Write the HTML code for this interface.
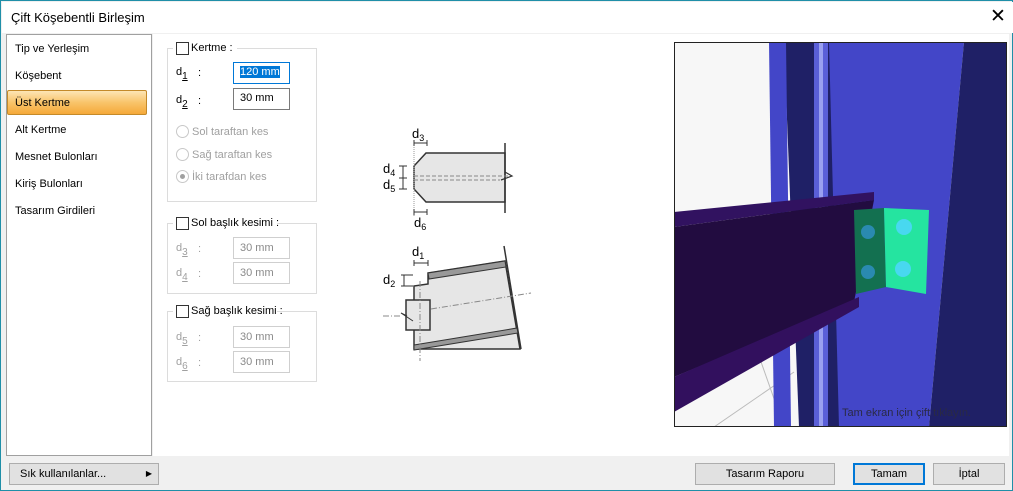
<!DOCTYPE html>
<html><head><meta charset="utf-8"><style>
*{box-sizing:border-box;margin:0;padding:0}
body{width:1013px;height:491px;overflow:hidden;font-family:"Liberation Sans",sans-serif;font-size:12px;color:#000;background:#f0f0f0;position:relative}
.win{position:absolute;left:0;top:0;width:1013px;height:491px;border:1px solid #1f8fa8;background:#f0f0f0}
.abs{position:absolute}
.title{left:1px;top:1px;width:1011px;height:31px;background:#fff}
.list{left:5px;top:33px;width:146px;height:422px;background:#fff;border:1px solid #a0a0a0}
.main{left:152px;top:33px;width:856px;height:422px;background:#fff}
.li{position:absolute;left:14px;font-size:11px}
.sel{left:6px;top:89px;width:140px;height:25px;border:1px solid #c48a2a;border-radius:2px;background:linear-gradient(#fde5b5,#f9c46a 50%,#f5a93a)}
.grp{border:1px solid #dcdcdc;position:absolute}
.cb{position:absolute;width:13px;height:13px;border:1px solid #333;background:#fff}
.lbl{position:absolute;font-size:11px;white-space:nowrap}
.gray{color:#a0a0a0}
.in{position:absolute;width:57px;height:22px;border:1px solid #7a7a7a;background:#fff;padding:3px 0 0 6px;font-size:11px}
.in.dis{border-color:#cfcfcf;color:#8a8a8a;padding-top:4px}
.rad{position:absolute;width:13px;height:13px;border:1px solid #c8c8c8;border-radius:50%;background:#fff}
.btn{position:absolute;height:22px;border:1px solid #adadad;background:#e1e1e1;font-size:11px;text-align:center;line-height:20px}
sub{font-size:10px;text-decoration:underline;vertical-align:-4px}
</style></head><body><div class="win">
<div class="abs title"></div>
<div class="abs" style="left:10px;top:9px;font-size:13px">Çift Köşebentli Birleşim</div>
<div class="abs" style="left:989px;top:4px;font-size:19px">✕</div>
<div class="abs list"></div>
<div class="abs sel"></div>
<div class="li" style="top:42px">Tip ve Yerleşim</div>
<div class="li" style="top:69px">Köşebent</div>
<div class="li" style="top:96px">Üst Kertme</div>
<div class="li" style="top:123px">Alt Kertme</div>
<div class="li" style="top:150px">Mesnet Bulonları</div>
<div class="li" style="top:177px">Kiriş Bulonları</div>
<div class="li" style="top:204px">Tasarım Girdileri</div>
<div class="abs main"></div>

<div class="grp" style="left:166px;top:47px;width:150px;height:154px"></div>
<div class="abs" style="left:172px;top:40px;width:64px;height:14px;background:#fff"></div>
<div class="cb" style="left:175px;top:41px"></div><div class="lbl" style="left:190px;top:41px">Kertme :</div>
<div class="lbl" style="left:175px;top:65px">d<sub>1</sub></div><div class="lbl" style="left:197px;top:66px">:</div>
<div class="in" style="left:232px;top:61px;border-color:#0078d7"><span style="background:#0078d7;color:#fff">120 mm</span></div>
<div class="lbl" style="left:175px;top:93px">d<sub>2</sub></div><div class="lbl" style="left:197px;top:94px">:</div>
<div class="in" style="left:232px;top:87px">30 mm</div>
<div class="rad" style="left:175px;top:124px"></div><div class="lbl gray" style="left:191px;top:125px">Sol taraftan kes</div>
<div class="rad" style="left:175px;top:147px"></div><div class="lbl gray" style="left:191px;top:148px">Sağ taraftan kes</div>
<div class="rad" style="left:175px;top:169px"><div style="position:absolute;left:3px;top:3px;width:5px;height:5px;border-radius:50%;background:#a0a0a0"></div></div><div class="lbl gray" style="left:191px;top:170px">İki tarafdan kes</div>

<div class="grp" style="left:166px;top:222px;width:150px;height:71px"></div>
<div class="abs" style="left:172px;top:215px;width:104px;height:14px;background:#fff"></div>
<div class="cb" style="left:175px;top:216px"></div><div class="lbl" style="left:190px;top:216px">Sol başlık kesimi :</div>
<div class="lbl gray" style="left:175px;top:241px">d<sub>3</sub></div><div class="lbl gray" style="left:197px;top:242px">:</div>
<div class="in dis" style="left:232px;top:236px">30 mm</div>
<div class="lbl gray" style="left:175px;top:266px">d<sub>4</sub></div><div class="lbl gray" style="left:197px;top:267px">:</div>
<div class="in dis" style="left:232px;top:261px">30 mm</div>

<div class="grp" style="left:166px;top:310px;width:150px;height:71px"></div>
<div class="abs" style="left:172px;top:303px;width:104px;height:14px;background:#fff"></div>
<div class="cb" style="left:175px;top:304px"></div><div class="lbl" style="left:190px;top:304px">Sağ başlık kesimi :</div>
<div class="lbl gray" style="left:175px;top:330px">d<sub>5</sub></div><div class="lbl gray" style="left:197px;top:331px">:</div>
<div class="in dis" style="left:232px;top:325px">30 mm</div>
<div class="lbl gray" style="left:175px;top:355px">d<sub>6</sub></div><div class="lbl gray" style="left:197px;top:356px">:</div>
<div class="in dis" style="left:232px;top:350px">30 mm</div>

<svg class="abs" style="left:370px;top:120px" width="170" height="240" viewBox="0 0 170 240" font-family="Liberation Sans" font-size="13">
<path d="M55 32 H134 V81 H55 L43 68 V45 Z" fill="#e6e6e6" stroke="#333" stroke-width="1.5"/>
<line x1="134" y1="22" x2="134" y2="92" stroke="#333" stroke-width="1.5"/>
<path d="M43 55 H139 M43 59 H129" stroke="#888" stroke-dasharray="4 2"/>
<path d="M134 51 L141 55 L130 59" fill="none" stroke="#333" stroke-width="1.2"/>
<line x1="43" y1="22" x2="43" y2="95" stroke="#999" stroke-dasharray="1 1"/>
<path d="M43 22 H56 M43 91 H56 M28 45 H36 M28 57 H36 M28 68 H36" stroke="#333"/>
<path d="M43 19 V25 M56 19 V25 M43 88 V94 M56 88 V94 M32 45 V68" stroke="#333"/>
<text x="41" y="17">d<tspan font-size="9" dy="3">3</tspan></text>
<text x="12" y="52">d<tspan font-size="9" dy="3">4</tspan></text>
<text x="12" y="68">d<tspan font-size="9" dy="3">5</tspan></text>
<text x="43" y="106">d<tspan font-size="9" dy="3">6</tspan></text>
<path d="M57 152 L134 140 L149 228 L43 228 L43 165 L57 163 Z" fill="#e6e6e6" stroke="#333" stroke-width="1.5"/>
<path d="M57 152 L134 140 L135 146 L58 158 Z M43 224 L146 207 L147 212 L43 229 Z" fill="#999" stroke="#333"/>
<path d="M133 125 L150 228" stroke="#333" stroke-width="1.5"/>
<rect x="35" y="179" width="24" height="30" fill="#e6e6e6" stroke="#333" stroke-width="1.5"/>
<path d="M12 195 H30 M60 188 L160 172" stroke="#888" stroke-dasharray="6 2 1 2"/>
<path d="M36 195 L30 192 L42 200" fill="none" stroke="#333"/>
<line x1="49" y1="160" x2="49" y2="240" stroke="#888" stroke-dasharray="6 2 1 2"/>
<path d="M43 142 H57 M30 154 H42 M30 165 H42 M43 139 V145 M57 139 V145 M33 154 V165" stroke="#333"/>
<text x="41" y="135">d<tspan font-size="9" dy="3">1</tspan></text>
<text x="12" y="163">d<tspan font-size="9" dy="3">2</tspan></text>
</svg>

<svg class="abs" style="left:673px;top:41px" width="333" height="385" viewBox="0 0 333 385">
<rect width="333" height="385" fill="#f7f7f7"/>
<path d="M0 340 L80 310 M40 385 L120 330 M80 300 L110 385" stroke="#bbb"/>
<path d="M110 0 L165 0 L175 385 L125 385 Z" fill="#1f2066"/>
<path d="M95 0 L112 0 L117 385 L100 385 Z" fill="#4346c8"/>
<rect x="140" y="0" width="14" height="385" fill="#5a5fd8"/><rect x="145" y="0" width="4" height="385" fill="#9aa0f0"/>
<path d="M155 0 L290 0 L255 385 L165 385 Z" fill="#4346c8"/>
<path d="M290 0 L333 0 L333 385 L255 385 Z" fill="#1f2066"/>
<path d="M0 170 L200 150 L200 158 L0 185 Z" fill="#311260"/>
<path d="M0 185 L200 158 L180 260 L0 335 Z" fill="#220c40"/>
<path d="M0 335 L185 255 L185 265 L0 370 Z" fill="#32105e"/>
<path d="M180 168 L210 166 L212 245 L182 252 Z" fill="#137050"/>
<path d="M210 166 L255 168 L252 252 L212 245 Z" fill="#25e4a0"/>
<circle cx="194" cy="190" r="7" fill="#2a8ab0"/><circle cx="194" cy="230" r="7" fill="#2a8ab0"/>
<circle cx="230" cy="185" r="8" fill="#48d8f0"/><circle cx="229" cy="227" r="8" fill="#48d8f0"/>
<rect x="0" y="0" width="333" height="385" fill="none" stroke="#222" stroke-width="2"/>
<text x="168" y="374" font-family="Liberation Sans" font-size="11" fill="#2a2a44">Tam ekran için çift tıklayın.</text>
</svg>

<div class="btn" style="left:8px;top:462px;width:150px;text-align:left;padding-left:10px">Sık kullanılanlar...<span style="position:absolute;right:6px;font-size:8px">▶</span></div>
<div class="btn" style="left:694px;top:462px;width:140px">Tasarım Raporu</div>
<div class="btn" style="left:852px;top:462px;width:72px;border:2px solid #0078d7;line-height:18px">Tamam</div>
<div class="btn" style="left:932px;top:462px;width:72px">İptal</div>
</div></body></html>
